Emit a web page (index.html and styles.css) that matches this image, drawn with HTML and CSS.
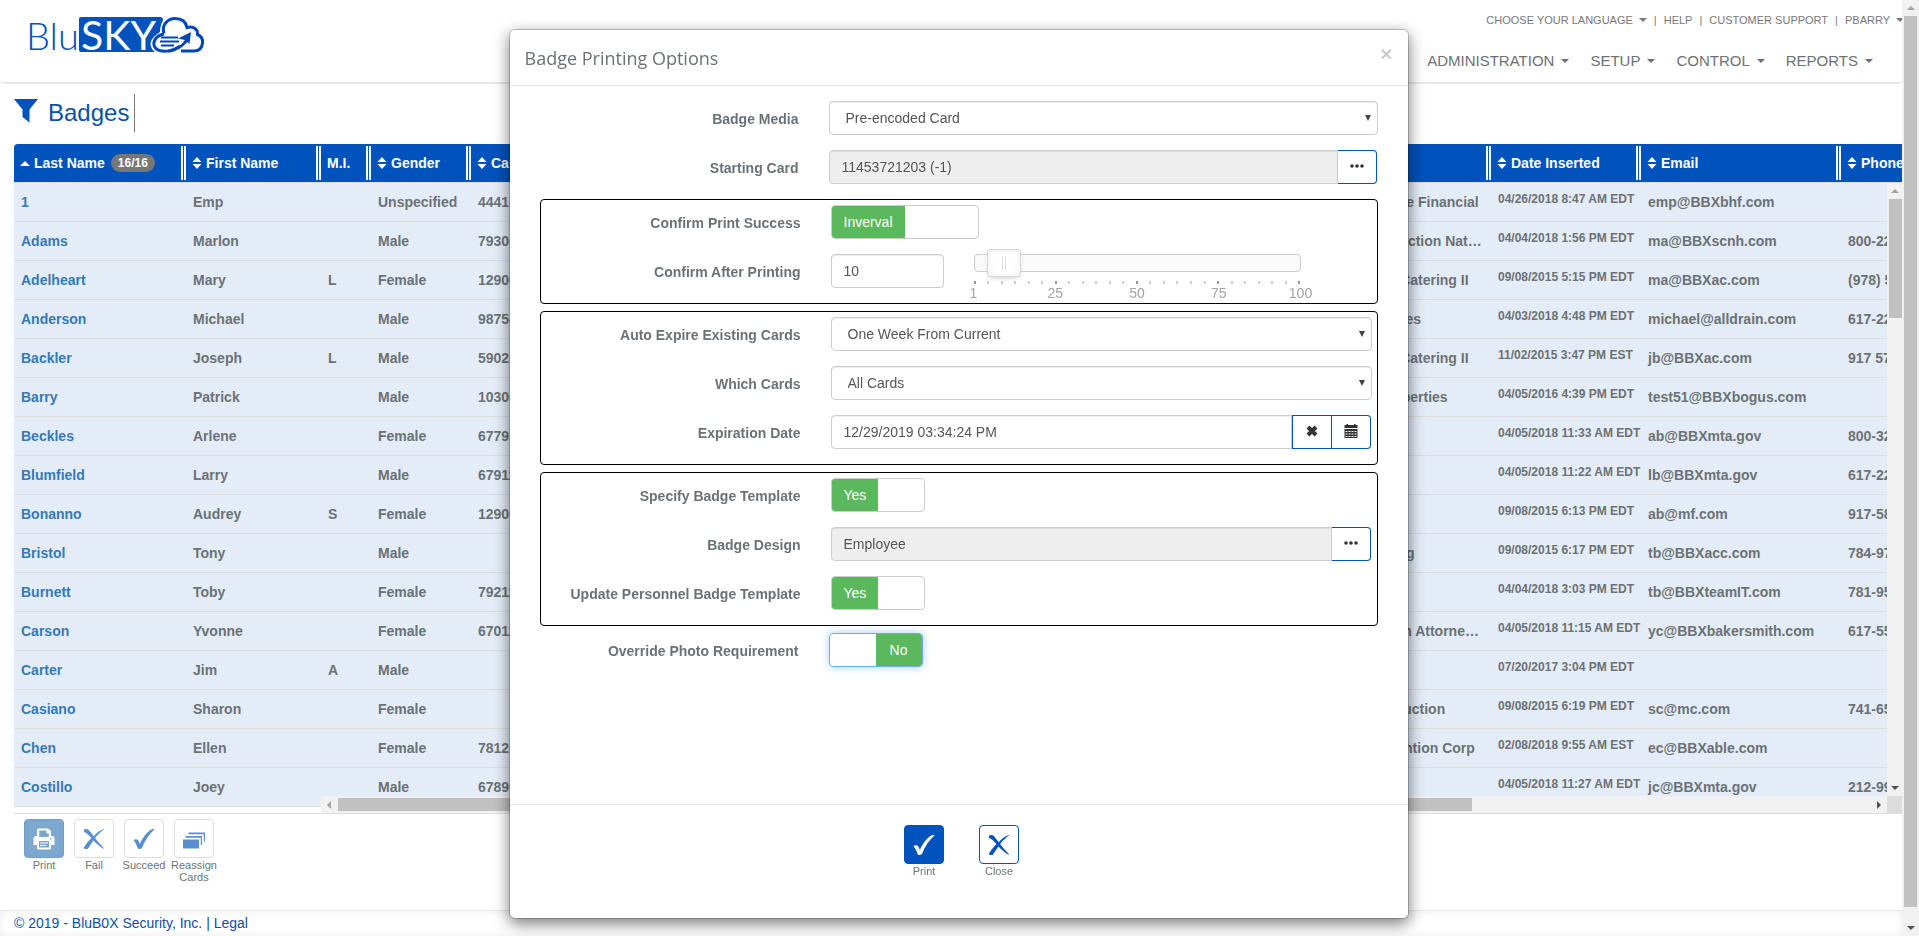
FILE: index.html
```html
<!DOCTYPE html>
<html lang="en">
<head>
  <meta charset="UTF-8" />
  <meta name="viewport" content="width=device-width, initial-scale=1.0"/>
  <title>Badges - BluSKY</title>
  <link rel="stylesheet" href="styles.css">
</head>
<body>
  <svg class="symbols" aria-hidden="true">
    <symbol id="icon-sort" viewBox="0 0 10 12"><path d="M5 0 L9.5 5 H0.5 Z M5 12 L0.5 7 H9.5 Z"/></symbol>
    <symbol id="icon-cross" viewBox="0 0 22 22"><path d="M1 1.6 C3 .4 5 .9 6.200 2.400 C8 4.500 9.300 6.400 10.700 8.200 C13.500 5 16.800 2.200 20.600 1 L21 1.600 C17.500 3.900 14.600 6.800 12.100 10.100 C14.500 13.300 17.400 16.800 21 20.300 L20.500 20.800 C16.600 18.200 13.300 15.200 10.400 12.400 C8.300 15.300 6.300 18.300 4.900 20.700 C3.500 21.500 1.500 21 .7 19.900 C2.600 16.500 5.400 13.200 8.500 10.100 C6.200 7.600 4 5.300 1 3.800 Z"/></symbol>
    <symbol id="icon-check" viewBox="0 0 22 22"><path d="M.5 12.200 C1.900 10.800 4.200 10.800 5.200 12.300 C5.900 13.300 6.400 14.600 6.900 16 C9.700 9.600 13.900 4.200 18.200 1.600 C19.500 1 21 .9 21.600 1.200 C16 6.200 12 12.200 9.200 19.500 C8.400 21 6 21.400 5 20.700 C4 18 2.800 14.800 .5 12.200 Z"/></symbol>
    <symbol id="icon-dots" viewBox="0 0 14 4"><circle cx="2" cy="2" r="1.800"/><circle cx="7" cy="2" r="1.800"/><circle cx="12" cy="2" r="1.800"/></symbol>
  </svg>

  <div class="page">
    <header class="topbar">
      <a class="logo" href="#" aria-label="BluSKY">
        <svg width="184" height="56" viewBox="-4 -8 184 56">
          <text class="logo-blu" x="-2" y="34">Blu</text>
          <path d="M53 1 H132 Q135 1 135 4 L127 36 H53 Q51 36 51 34 V3 Q51 1 53 1 Z" fill="#0052bc"/>
          <text class="logo-sky" x="53" y="34">SKY</text>
          <path d="M128 37 Q117 28 128 19 L132 16 Q132 1 146 0 Q158 0 162 8 Q171 9 172 17 Q178 21 177 28 Q174 37 165 37 Z" fill="#fff"/>
          <path d="M136 17.500 C133 9 140 2.500 147 2.500 C154 2.500 158 6 159 11.500 C165 9.500 170 13 169.500 18.500 C173 20 175 23 174.500 27 C174 32 171 35 166 35 H153" fill="none" stroke="#0047b5" stroke-width="3"/>
          <path d="M136 18 C126 20 124 28 127.500 32 C132 37 145 36 152 30" fill="none" stroke="#0047b5" stroke-width="3"/>
          <path d="M142 34.500 C150 32 154 28 157 24 L150 22.500 L163 16 L161.500 28 L159.500 26 C155 31 148 36 140 36.500 Z" fill="#0047b5"/>
          <path d="M133 21.500 H150 M132 25.500 H151 M133 29.500 H146" stroke="#0047b5" stroke-width="2"/>
        </svg>
      </a>
      <div class="menus">
        <nav class="user-menu">
          <a class="caret" href="#">CHOOSE YOUR LANGUAGE</a><span>|</span>
          <a href="#">HELP</a><span>|</span>
          <a href="#">CUSTOMER SUPPORT</a><span>|</span>
          <a class="caret" href="#">PBARRY</a>
        </nav>
        <nav class="main-menu">
          <a class="caret" href="#">ADMINISTRATION</a>
          <a class="caret" href="#">SETUP</a>
          <a class="caret" href="#">CONTROL</a>
          <a class="caret" href="#">REPORTS</a>
        </nav>
      </div>
    </header>

    <main class="content">
      <div class="title-row">
        <svg class="filter" width="24" height="24" viewBox="0 0 24 24"><path d="M0 0 H24 L15.500 10.500 V23.500 L8.500 18 V10.500 Z"/></svg>
        <h1>Badges</h1>
      </div>

      <div class="grid">
        <table>
          <colgroup>
            <col class="w-last"><col class="w-first"><col class="w-mi"><col class="w-gender"><col>
            <col class="w-company"><col class="w-date"><col class="w-email"><col class="w-phone">
          </colgroup>
          <thead>
            <tr>
              <th><span><i class="sort-up"></i>Last Name <b class="count">16/16</b></span></th>
              <th><span><svg><use href="#icon-sort"/></svg>First Name</span></th>
              <th><span>M.I.</span></th>
              <th><span><svg><use href="#icon-sort"/></svg>Gender</span></th>
              <th><span><svg><use href="#icon-sort"/></svg>Card</span></th>
              <th><span></span></th>
              <th><span><svg><use href="#icon-sort"/></svg>Date Inserted</span></th>
              <th><span><svg><use href="#icon-sort"/></svg>Email</span></th>
              <th><span><svg><use href="#icon-sort"/></svg>Phone</span></th>
            </tr>
          </thead>
          <tbody>
            <tr><td><a href="#">1</a></td><td>Emp</td><td></td><td>Unspecified</td><td>44410</td><td>Blue Lake Financial</td><td class="date">04/26/2018 8:47 AM EDT</td><td>emp@BBXbhf.com</td><td></td></tr>
            <tr><td><a href="#">Adams</a></td><td>Marlon</td><td></td><td>Male</td><td>79300</td><td>NC Protection National</td><td class="date">04/04/2018 1:56 PM EDT</td><td>ma@BBXscnh.com</td><td>800-22</td></tr>
            <tr><td><a href="#">Adelheart</a></td><td>Mary</td><td>L</td><td>Female</td><td>12900</td><td>Amster Catering II</td><td class="date">09/08/2015 5:15 PM EDT</td><td>ma@BBXac.com</td><td>(978) 5</td></tr>
            <tr><td><a href="#">Anderson</a></td><td>Michael</td><td></td><td>Male</td><td>98754</td><td>Bay Stores</td><td class="date">04/03/2018 4:48 PM EDT</td><td>michael@alldrain.com</td><td>617-22</td></tr>
            <tr><td><a href="#">Backler</a></td><td>Joseph</td><td>L</td><td>Male</td><td>59020</td><td>Amster Catering II</td><td class="date">11/02/2015 3:47 PM EST</td><td>jb@BBXac.com</td><td>917 57</td></tr>
            <tr><td><a href="#">Barry</a></td><td>Patrick</td><td></td><td>Male</td><td>10300</td><td>Oak Properties</td><td class="date">04/05/2016 4:39 PM EDT</td><td>test51@BBXbogus.com</td><td></td></tr>
            <tr><td><a href="#">Beckles</a></td><td>Arlene</td><td></td><td>Female</td><td>67798</td><td></td><td class="date">04/05/2018 11:33 AM EDT</td><td>ab@BBXmta.gov</td><td>800-32</td></tr>
            <tr><td><a href="#">Blumfield</a></td><td>Larry</td><td></td><td>Male</td><td>67911</td><td></td><td class="date">04/05/2018 11:22 AM EDT</td><td>lb@BBXmta.gov</td><td>617-22</td></tr>
            <tr><td><a href="#">Bonanno</a></td><td>Audrey</td><td>S</td><td>Female</td><td>12900</td><td></td><td class="date">09/08/2015 6:13 PM EDT</td><td>ab@mf.com</td><td>917-58</td></tr>
            <tr><td><a href="#">Bristol</a></td><td>Tony</td><td></td><td>Male</td><td></td><td>Ace Tiling</td><td class="date">09/08/2015 6:17 PM EDT</td><td>tb@BBXacc.com</td><td>784-97</td></tr>
            <tr><td><a href="#">Burnett</a></td><td>Toby</td><td></td><td>Female</td><td>79211</td><td></td><td class="date">04/04/2018 3:03 PM EDT</td><td>tb@BBXteamIT.com</td><td>781-95</td></tr>
            <tr><td><a href="#">Carson</a></td><td>Yvonne</td><td></td><td>Female</td><td>67011</td><td>Hayworth Attorneys at Law</td><td class="date">04/05/2018 11:15 AM EDT</td><td>yc@BBXbakersmith.com</td><td>617-55</td></tr>
            <tr><td><a href="#">Carter</a></td><td>Jim</td><td>A</td><td>Male</td><td></td><td></td><td class="date">07/20/2017 3:04 PM EDT</td><td></td><td></td></tr>
            <tr><td><a href="#">Casiano</a></td><td>Sharon</td><td></td><td>Female</td><td></td><td>SC Production</td><td class="date">09/08/2015 6:19 PM EDT</td><td>sc@mc.com</td><td>741-65</td></tr>
            <tr><td><a href="#">Chen</a></td><td>Ellen</td><td></td><td>Female</td><td>78120</td><td>Al Prevention Corp</td><td class="date">02/08/2018 9:55 AM EST</td><td>ec@BBXable.com</td><td></td></tr>
            <tr><td><a href="#">Costillo</a></td><td>Joey</td><td></td><td>Male</td><td>67890</td><td></td><td class="date">04/05/2018 11:27 AM EDT</td><td>jc@BBXmta.gov</td><td>212-99</td></tr>
          </tbody>
        </table>
        <div class="scroll-y grid-scroll-y"><i class="arrow up"></i><i class="thumb"></i><i class="arrow down"></i></div>
        <div class="scroll-x"><i class="arrow left"></i><i class="thumb"></i><i class="arrow right"></i></div>
        <div class="scroll-corner"></div>
      </div>

      <div class="toolbar">
        <div class="tool">
          <button class="primary" id="tb-print" aria-label="Print">
            <svg width="22" height="22" viewBox="0 0 22 22"><path fill="#fff" fill-rule="evenodd" d="M4 8 V2 Q4 .5 5.500 .5 H15 L18 3 V8 H19 Q21.500 8 21.500 10.500 V17 H18 V20 Q18 21.500 16.500 21.500 H5.500 Q4 21.500 4 20 V17 H.5 V10.500 Q.5 8 3 8 Z M6.200 2.500 V9 H15.800 V5.200 H13.500 V2.500 Z M6 13 V19.500 H16 V13 Z M18.500 10 H17 V11.500 H18.500 Z"/><path d="M7 15 H15 M7 17.500 H13" stroke="#fff"/></svg>
          </button>
          <label for="tb-print">Print</label>
        </div>
        <div class="tool">
          <button id="tb-fail" aria-label="Fail"><svg width="22" height="22"><use href="#icon-cross"/></svg></button>
          <label for="tb-fail">Fail</label>
        </div>
        <div class="tool">
          <button id="tb-succeed" aria-label="Succeed"><svg width="22" height="22"><use href="#icon-check"/></svg></button>
          <label for="tb-succeed">Succeed</label>
        </div>
        <div class="tool">
          <button id="tb-reassign" aria-label="Reassign Cards">
            <svg width="22" height="22" viewBox="0 0 22 22"><path d="M0 11.500 H16 V20.500 H0 Z M2.500 8 H19 V17 H17.800 V9.800 H2.500 Z M5.500 4.500 H22 V13.500 H20.800 V6.300 H5.500 Z"/></svg>
          </button>
          <label for="tb-reassign">Reassign Cards</label>
        </div>
      </div>
    </main>

    <footer class="footer">© 2019 - BluB0X Security, Inc. | <a href="#">Legal</a></footer>
  </div>
  <div class="scroll-y page-scroll"><i class="arrow up"></i><i class="thumb"></i><i class="arrow down"></i></div>

  <div class="modal" role="dialog" aria-labelledby="modal-title">
    <div class="modal-header">
      <h2 id="modal-title">Badge Printing Options</h2>
      <button class="close" aria-label="Dismiss">×</button>
    </div>
    <form class="modal-body">
      <div class="row">
        <label for="media">Badge Media</label>
        <div class="select"><select id="media"><option>Pre-encoded Card</option></select></div>
      </div>
      <div class="row">
        <label for="card">Starting Card</label>
        <div class="group">
          <input type="text" id="card" value="11453721203 (-1)" readonly>
          <button type="button" aria-label="Choose card"><svg width="14" height="4"><use href="#icon-dots"/></svg></button>
        </div>
      </div>

      <div class="box">
        <div class="row">
          <label for="confirm">Confirm Print Success</label>
          <label class="switch wide"><input type="checkbox" id="confirm" checked><span>Inverval</span></label>
        </div>
        <div class="row">
          <label for="after">Confirm After Printing</label>
          <input type="text" class="short" id="after" value="10">
          <div class="slider">
            <div class="track"><input type="range" min="1" max="100" value="10" aria-label="Confirm After Printing"></div>
            <div class="ticks">
              <b></b><i></i><i></i><i></i><i></i><i></i><b></b><i></i><i></i><i></i><i></i><i></i><b></b><i></i><i></i><i></i><i></i><i></i><b></b><i></i><i></i><i></i><i></i><i></i><b></b>
            </div>
            <div class="marks"><span>1</span><span>25</span><span>50</span><span>75</span><span>100</span></div>
          </div>
        </div>
      </div>

      <div class="box">
        <div class="row">
          <label for="expire">Auto Expire Existing Cards</label>
          <div class="select"><select id="expire"><option>One Week From Current</option></select></div>
        </div>
        <div class="row">
          <label for="which">Which Cards</label>
          <div class="select"><select id="which"><option>All Cards</option></select></div>
        </div>
        <div class="row">
          <label for="date">Expiration Date</label>
          <div class="group">
            <input type="text" id="date" value="12/29/2019 03:34:24 PM">
            <button type="button" class="bordered" aria-label="Clear date"><svg width="12" height="12" viewBox="0 0 12 12"><path d="M2 2 L10 10 M10 2 L2 10" stroke="#333" stroke-width="4"/></svg></button>
            <button type="button" aria-label="Pick date"><svg width="14" height="14" viewBox="0 0 14 14"><path fill-rule="evenodd" d="M.5 1 H2.500 V0 H4 V1 H10 V0 H11.500 V1 H13.500 V4 H.5 Z M.5 5 H13.500 V14 H.5 Z"/><path d="M1.500 7.500 H12.500 M1.500 10 H12.500 M1.500 12.500 H12.500" stroke="#fff" stroke-dasharray="2 1"/></svg></button>
          </div>
        </div>
      </div>

      <div class="box">
        <div class="row">
          <label for="specify">Specify Badge Template</label>
          <label class="switch"><input type="checkbox" id="specify" checked><span>Yes</span></label>
        </div>
        <div class="row">
          <label for="design">Badge Design</label>
          <div class="group">
            <input type="text" id="design" value="Employee" readonly>
            <button type="button" aria-label="Choose design"><svg width="14" height="4"><use href="#icon-dots"/></svg></button>
          </div>
        </div>
        <div class="row">
          <label for="update">Update Personnel Badge Template</label>
          <label class="switch"><input type="checkbox" id="update" checked><span>Yes</span></label>
        </div>
      </div>

      <div class="row">
        <label for="override">Override Photo Requirement</label>
        <label class="switch off focused"><input type="checkbox" id="override"><span>No</span></label>
      </div>
    </form>
    <div class="modal-footer">
      <div class="tool">
        <button class="primary" id="do-print" aria-label="Print"><svg width="22" height="22"><use href="#icon-check"/></svg></button>
        <label for="do-print">Print</label>
      </div>
      <div class="tool">
        <button id="do-close" aria-label="Close"><svg width="22" height="22"><use href="#icon-cross"/></svg></button>
        <label for="do-close">Close</label>
      </div>
    </div>
  </div>
</body>
</html>
```

FILE: styles.css
```css
* {
  box-sizing: border-box;
}

body {
  margin: 0;
  display: flex;
  height: 100vh;
  overflow: hidden;
  font-family: "Liberation Sans", Arial, sans-serif;
  font-size: 14px;
  line-height: 20px;
  color: #6b7275;
  background: #fff;
}

a {
  color: inherit;
  text-decoration: none;
}

button, input, select {
  font: inherit;
  color: inherit;
}

button {
  cursor: pointer;
}

.symbols {
  position: absolute;
  width: 0;
  height: 0;
}

.page {
  flex: 1;
  min-width: 0;
  display: flex;
  flex-direction: column;
}

/* top bar */
.topbar {
  height: 84px;
  display: flex;
  justify-content: space-between;
  border-bottom: 2px solid #e7e7e7;
  border-radius: 4px;
}

.logo {
  padding: 8px 0 0 24px;
}

.logo-blu {
  font: 300 38px Lato, sans-serif;
  fill: #0052bc;
}

.logo-sky {
  font: 400 41px Lato, sans-serif;
  fill: #fff;
}

.menus {
  display: flex;
  flex-direction: column;
  align-items: flex-end;
  gap: 21px;
  padding-top: 10px;
}

.user-menu {
  display: flex;
  gap: 7px;
  margin-right: -2px;
  font-size: 11px;
  color: #777;
}

.main-menu {
  display: flex;
  gap: 21px;
  padding-right: 29px;
  font-size: 15px;
}

.caret {
  display: flex;
  align-items: center;
  gap: 7px;
}

.caret::after {
  content: "";
  border: 4px solid transparent;
  border-top-color: currentColor;
  border-bottom: 0;
}

.user-menu .caret {
  gap: 6px;
}

/* page heading */
.content {
  flex: 1;
  padding-left: 14px;
}

.title-row {
  display: flex;
  gap: 10px;
  height: 60px;
  padding-top: 10px;
}

.filter {
  margin-top: 5px;
  fill: #0052bc;
}

h1 {
  height: 38px;
  margin: 0;
  padding-right: 5px;
  border-right: 1px solid #777;
  font-size: 24px;
  font-weight: normal;
  line-height: 38px;
  color: #0a4fa8;
}

/* data grid */
.grid {
  position: relative;
  padding-bottom: 6px;
  border-bottom: 1px solid #ddd;
}

table {
  width: 100%;
  table-layout: fixed;
  border-collapse: separate;
  border-spacing: 0;
  border-radius: 4px 0 0 0;
  overflow: hidden;
}

.w-last { width: 172px; }
.w-first { width: 135px; }
.w-mi { width: 50px; }
.w-gender { width: 100px; }
.w-company, .w-date { width: 150px; }
.w-email { width: 200px; }
.w-phone { width: 61px; }

th, td {
  overflow: hidden;
  white-space: nowrap;
  text-align: left;
  font-weight: bold;
  border-bottom: 1px solid #ddd;
}

th {
  height: 39px;
  padding: 0;
  background: #0052bc;
  color: #fff;
}

th span {
  display: flex;
  align-items: center;
  gap: 4px;
  height: 34px;
  padding-left: 6px;
  border-right: 5px double #fff;
}

th:last-child span {
  border-right: 0;
}

th svg {
  flex: none;
  width: 10px;
  height: 12px;
  fill: #fff;
}

.sort-up {
  border: 5px solid transparent;
  border-bottom-color: #fff;
  border-top: 0;
}

.count {
  margin-left: 2px;
  padding: 0 7px;
  border-radius: 9px;
  background: #777;
  font-size: 12px;
  line-height: 18px;
}

td {
  height: 39px;
  padding: 0 7px;
  background: #e4ecf7;
  text-overflow: ellipsis;
}

td:last-child {
  text-overflow: clip;
}

td a {
  color: #337ab7;
}

.date {
  padding: 6px 0 0 7px;
  vertical-align: top;
  font-size: 12px;
  text-overflow: clip;
}

/* scroll bars */
.scroll-y, .scroll-x {
  display: flex;
  align-items: center;
  justify-content: space-between;
  background: #f1f1f1;
}

.scroll-y {
  flex-direction: column;
  width: 17px;
  padding: 6px 0;
}

.thumb {
  background: #c1c1c1;
}

.page-scroll .thumb {
  width: 13px;
  height: calc(100% - 33px);
  margin: 6px 0 auto;
}

.grid-scroll-y {
  position: absolute;
  top: 39px;
  right: 0;
  bottom: 17px;
  width: 15px;
}

.grid-scroll-y .thumb {
  align-self: flex-end;
  width: 13px;
  height: 119px;
  margin: 6px 0 auto;
}

.scroll-x {
  position: absolute;
  left: 307px;
  right: 15px;
  bottom: 0;
  height: 17px;
  padding: 0 6px;
}

.scroll-x .thumb {
  width: 73%;
  height: 13px;
  margin: 0 auto 0 7px;
}

.scroll-corner {
  position: absolute;
  right: 0;
  bottom: 0;
  width: 15px;
  height: 17px;
  background: #dcdcdc;
}

.arrow {
  border: 4px solid transparent;
}

.arrow.up { border-bottom-color: #a3a3a3; border-top: 0; }
.arrow.down { border-top-color: #505050; border-bottom: 0; }
.arrow.left { border-right-color: #a3a3a3; border-left: 0; }
.arrow.right { border-left-color: #505050; border-right: 0; }

/* icon buttons with a caption */
.toolbar {
  display: flex;
  gap: 10px;
  padding: 5px 10px;
}

.tool {
  display: flex;
  flex-direction: column;
  align-items: center;
  width: 40px;
  font-size: 11px;
  line-height: 12px;
  text-align: center;
}

.tool button {
  display: flex;
  align-items: center;
  justify-content: center;
  width: 40px;
  height: 39px;
  padding: 0;
  border: 1px solid #0052bc;
  border-radius: 4px;
  background: #fff;
  fill: #0052bc;
}

.tool button.primary {
  background: #0052bc;
  fill: #fff;
}

.tool label {
  margin: 1px -10px 0;
}

.toolbar button {
  border-color: #ddd;
  fill: #5a8ed3;
}

.toolbar button.primary {
  border-color: #70a0ca;
  background: #7ca8d0;
}

.footer {
  height: 26px;
  padding-left: 14px;
  border-top: 1px solid #e7e7e7;
  box-shadow: inset 0 0 8px rgba(0, 0, 0, 0.08);
  line-height: 24px;
  color: #0a4fa8;
}

/* dialog */
.modal {
  position: fixed;
  top: 29px;
  left: 50%;
  display: flex;
  flex-direction: column;
  width: 900px;
  height: calc(100vh - 46px);
  margin-left: -451px;
  border: 1px solid rgba(0, 0, 0, 0.2);
  border-radius: 6px;
  background: #fff;
  background-clip: padding-box;
  box-shadow: 0 5px 15px rgba(0, 0, 0, 0.5);
}

.modal-header {
  display: flex;
  align-items: flex-start;
  justify-content: space-between;
  height: 56px;
  padding: 15px;
  border-bottom: 1px solid #e5e5e5;
}

h2 {
  margin: 0;
  font: 18px/26px "Open Sans", sans-serif;
}

.close {
  padding: 0;
  border: 0;
  background: none;
  font-size: 21px;
  font-weight: bold;
  line-height: 18px;
  color: #ccc;
}

.modal-body {
  flex: 1;
  padding: 15px 30px;
}

.row {
  display: flex;
  margin-bottom: 15px;
}

.row > label:first-child {
  width: 259px;
  margin-right: 30px;
  padding-top: 8px;
  font-weight: bold;
  text-align: right;
}

.box {
  margin-bottom: 7px;
  padding: 5px 5px 0 1px;
  border: 1px solid #000;
  border-radius: 4px;
}

.modal input[type="text"], select {
  flex: 1;
  min-width: 0;
  height: 34px;
  padding: 6px 12px;
  border: 1px solid #ccc;
  border-radius: 4px;
  background: #fff;
  box-shadow: inset 0 1px 1px rgba(0, 0, 0, 0.075);
  color: #555;
}

.modal input[readonly] {
  background: #eee;
}

.modal input.short {
  flex: none;
  width: 113px;
}

.select {
  position: relative;
  display: flex;
  flex: 1;
}

select {
  appearance: none;
  padding: 6px 16px;
}

.select::after {
  content: "";
  position: absolute;
  top: 14px;
  right: 7px;
  border: 3px solid transparent;
  border-top: 6px solid #444;
  border-bottom: 0;
}

.group {
  display: flex;
  flex: 1;
  padding-right: 1px;
}

.modal .group input {
  border-radius: 4px 0 0 4px;
}

.group button {
  width: 39px;
  height: 34px;
  padding: 0 0 4px;
  border: 1px solid #0052bc;
  border-left: 0;
  border-radius: 0 4px 4px 0;
  background: #fff;
  fill: #333;
}

.group svg {
  vertical-align: middle;
}

.group .bordered {
  width: 40px;
  border-left: 1px solid #0052bc;
  border-radius: 0;
}

.switch {
  position: relative;
  display: flex;
  width: 94px;
  height: 34px;
  border: 1px solid #ccc;
  border-radius: 4px;
  overflow: hidden;
}

.switch.wide {
  width: 148px;
}

.switch input {
  position: absolute;
  opacity: 0;
}

.switch span {
  width: 50%;
  padding: 6px 12px;
  background: #5cb85c;
  text-align: center;
  color: #fff;
}

.switch.off {
  justify-content: flex-end;
}

.switch.focused {
  border-color: #66afe9;
  box-shadow: 0 0 8px rgba(102, 175, 233, 0.6);
}

.slider {
  width: 327px;
  margin-left: 30px;
}

.track {
  height: 18px;
  border: 1px solid #ccc;
  border-radius: 4px;
  background: #fafafa;
}

/* the thumb is centred on the ends of the track */
.track input {
  display: block;
  width: calc(100% + 34px);
  height: 28px;
  margin: -6px -17px;
  appearance: none;
  background: none;
}

.track input::-webkit-slider-thumb {
  appearance: none;
  width: 34px;
  height: 28px;
  border: 1px solid #d9d9d9;
  border-radius: 3px;
  background: linear-gradient(#ddd, #ddd) 14px 6px / 1px 14px no-repeat, linear-gradient(#ddd, #ddd) 17px 6px / 1px 14px no-repeat, #fff;
  box-shadow: inset 0 0 7px #ebebeb, 0 3px 6px -3px #bbb;
}

.ticks {
  display: flex;
  justify-content: space-between;
  margin-top: 9px;
}

.ticks i, .ticks b {
  width: 2px;
  height: 3px;
  background: #ccc;
}

.ticks b {
  background: #999;
}

.marks {
  display: flex;
  justify-content: space-between;
  height: 4px;
  margin: 0 -20px;
  line-height: 18px;
  color: #a3a3a3;
}

.marks span {
  width: 40px;
  text-align: center;
}

.modal-footer {
  display: flex;
  justify-content: center;
  gap: 35px;
  height: 114px;
  padding: 20px 0 0 6px;
  border-top: 1px solid #e5e5e5;
}
```
